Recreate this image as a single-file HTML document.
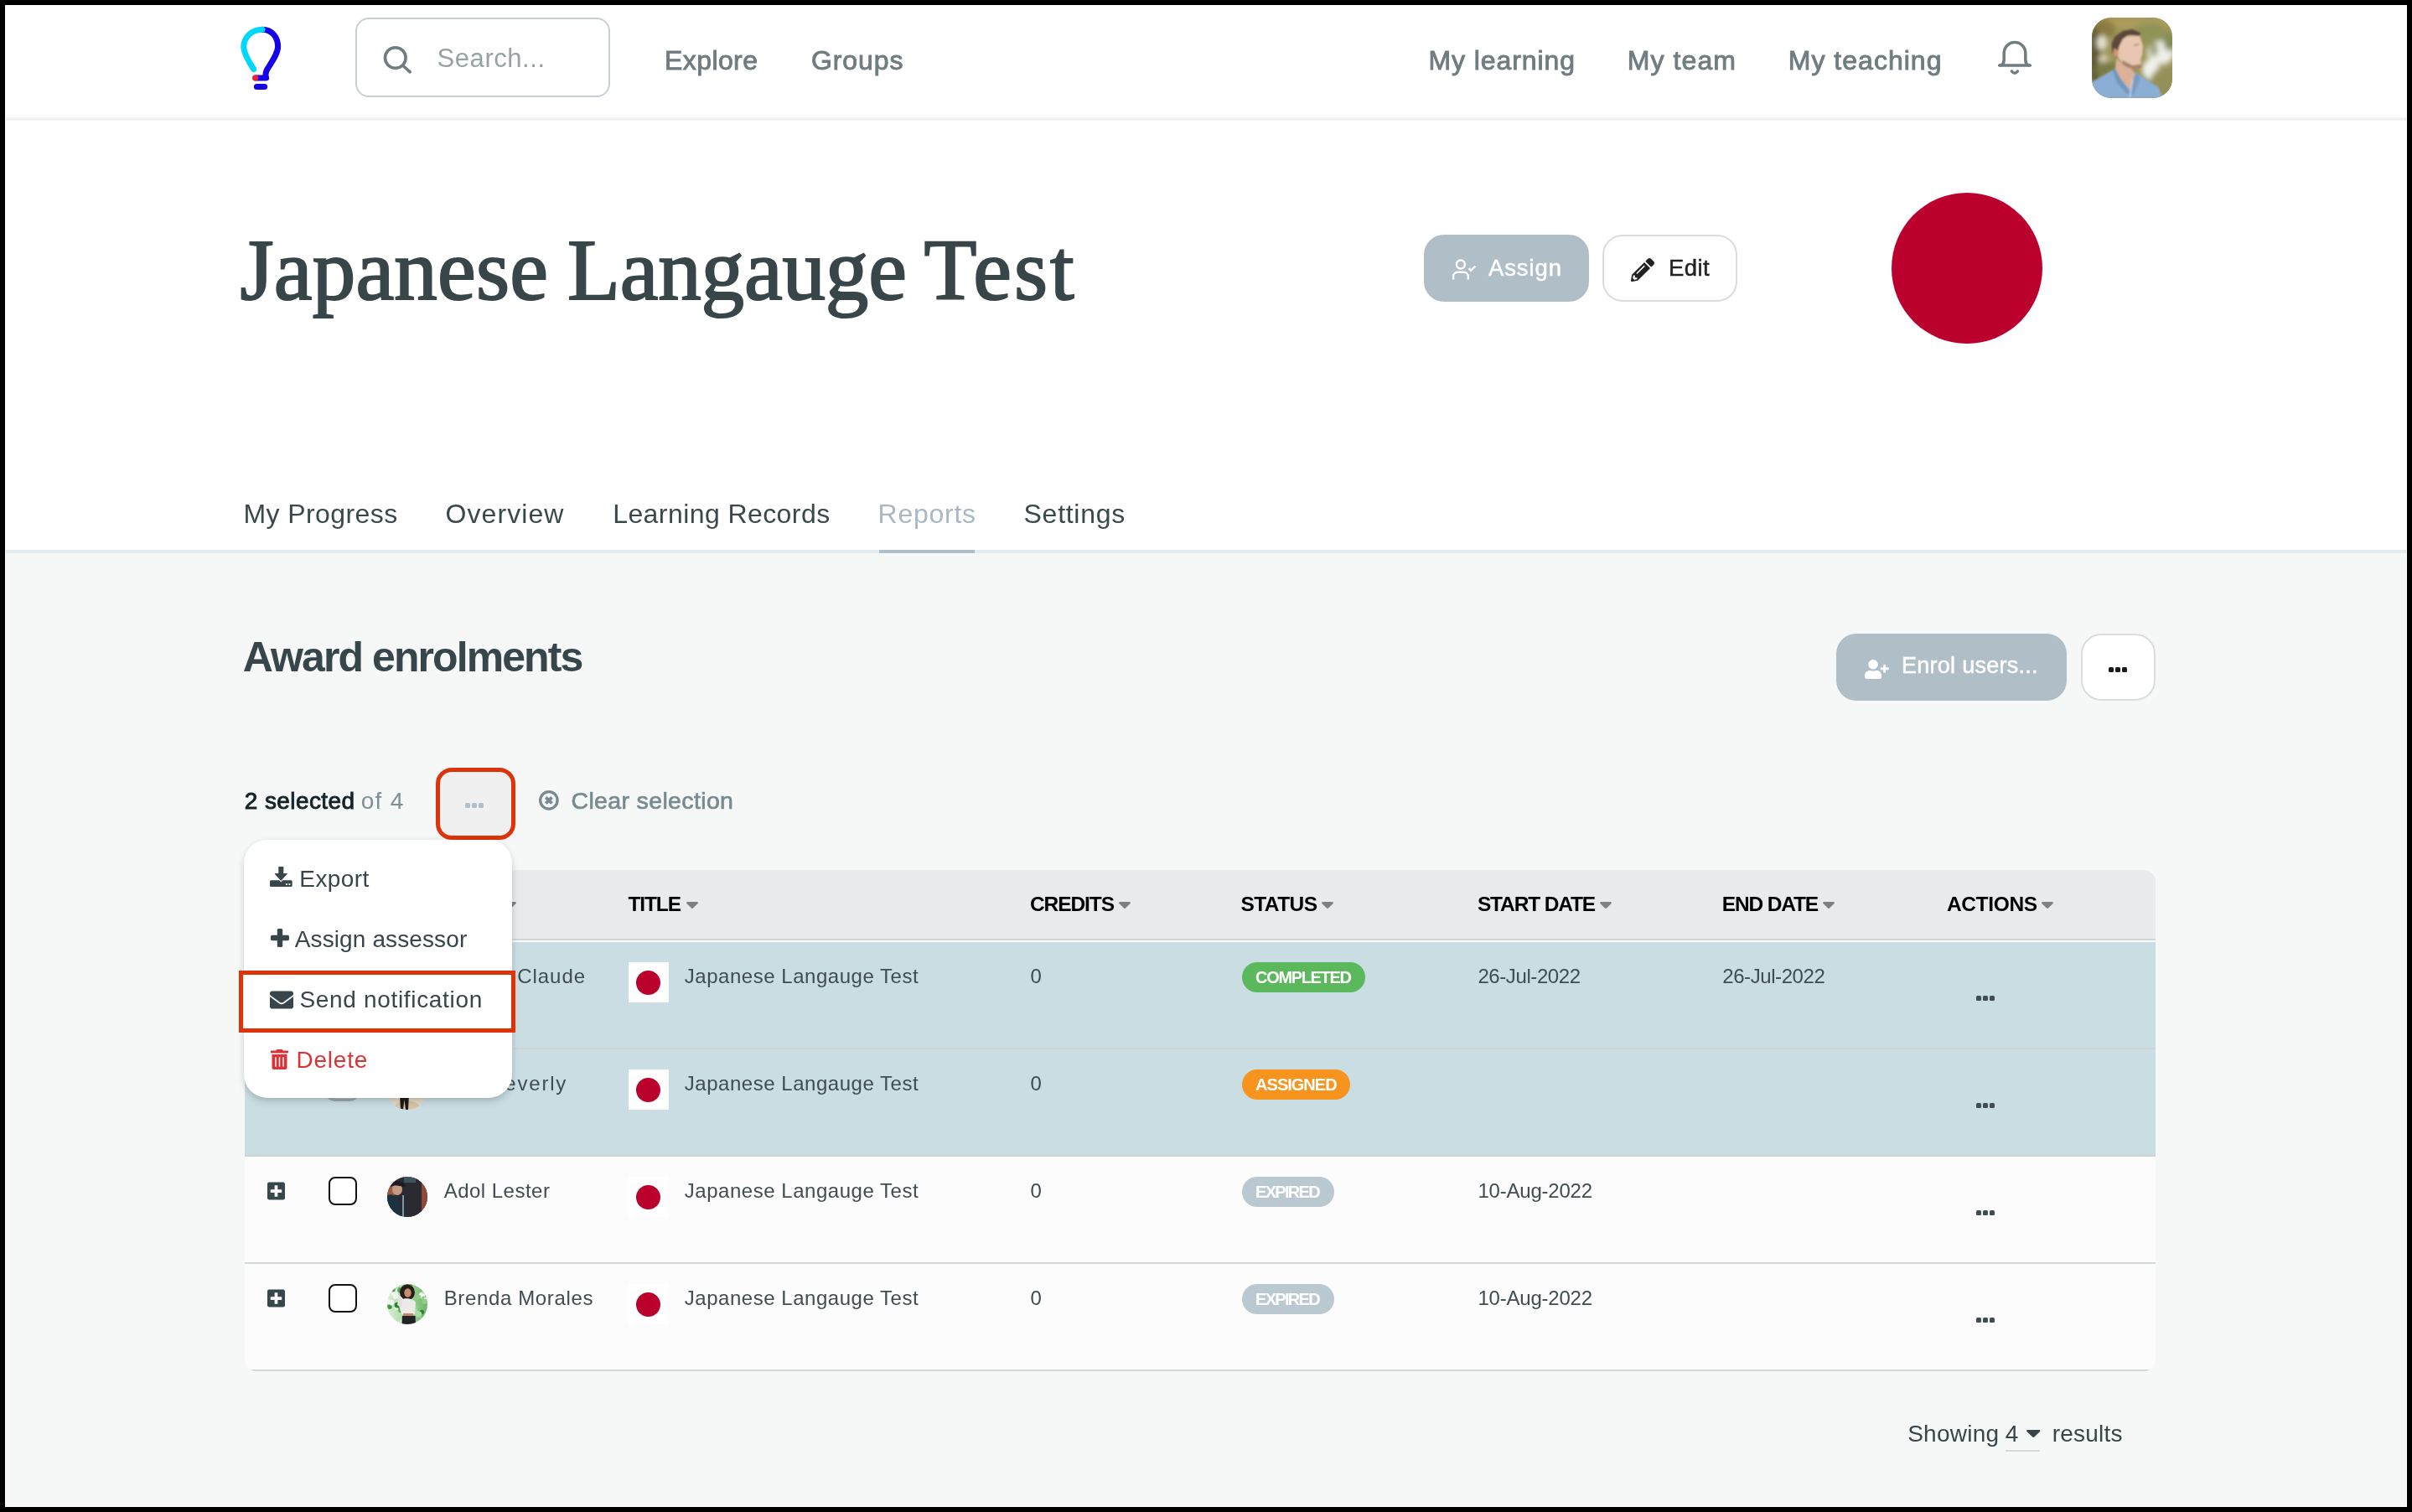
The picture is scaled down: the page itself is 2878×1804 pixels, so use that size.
<!DOCTYPE html>
<html lang="en">
<head>
<meta charset="utf-8">
<title>Japanese Langauge Test - Award enrolments</title>
<style>
*{box-sizing:border-box;margin:0;padding:0}
html,body{width:2878px;height:1804px;overflow:hidden;background:#000}
body{position:relative;font-family:"Liberation Sans",sans-serif;color:#37464a}
.abs,.t{position:absolute}
.t{white-space:pre;line-height:1;display:block}
.serif{font-family:"Liberation Serif",serif}
#page{position:absolute;left:6px;top:6px;width:2866px;height:1792px;background:#fff;overflow:hidden}
#wrap{position:absolute;left:-6px;top:-6px;width:2878px;height:1804px;will-change:transform}
svg{position:absolute;overflow:visible}
@media (max-width:1500px){html{zoom:.5}}
</style>
</head>
<body>
<div id="page"><div id="wrap">
<div class="abs" style="left:7px;top:140px;width:2864px;height:2px;background:#f3f4f6"></div>
<div class="abs" style="left:7px;top:142px;width:2864px;height:1px;background:#ebecec"></div>
<div class="abs" style="left:7px;top:143px;width:2864px;height:1px;background:#f6f6f6"></div>
<svg style="left:280px;top:24px" width="64" height="90" viewBox="280 24 64 90" fill="none" stroke-linecap="round" stroke-linejoin="round" stroke-width="7">
<path stroke="#1500e8" d="M313 35.3C324.500 35.300 331.600 44.500 331.600 55.7C331.600 63.500 325 73 319.500 81.5C317.200 85 316.400 89 317.600 93H305"/>
<path stroke="#00d8fb" d="M313 35.3C300.500 35.300 290.800 44.500 290.800 55.7C290.800 62.500 296.500 73 302.700 82.5"/>
<circle cx="304.7" cy="93" r="3.6" fill="#f01e3c" stroke="none"/>
<path stroke="#1500e8" d="M306.400 103.6H315.6"/>
</svg>
<div class="abs" style="left:424px;top:21px;width:304px;height:95px;border:2px solid #c7cfd2;border-radius:16px;background:#fff"></div>
<svg style="left:450px;top:48px" width="48" height="48" viewBox="450 48 48 48" fill="none" stroke="#6f7c80" stroke-width="3.6" stroke-linecap="round">
<circle cx="471.8" cy="69" r="12.3"/><path d="M481 78.5L489.200 85.8"/></svg>
<svg style="left:2380px;top:44px" width="48" height="50" viewBox="2380 44 48 50" fill="none" stroke="#6f7c80" stroke-width="3.5" stroke-linecap="round" stroke-linejoin="round">
<path d="M2385.6 77.9H2422.4"/>
<path d="M2387.5 77.9C2391.2 76.5 2391.2 73.5 2391.2 70V63.4A12.8 12.8 0 0 1 2416.8 63.4V70C2416.8 73.5 2416.8 76.5 2420.5 77.9"/>
<path d="M2400.4 85Q2403.9 89.6 2407.4 85"/>
</svg>
<svg style="left:2496px;top:21px" width="96" height="96" viewBox="0 0 96 96">
<defs><clipPath id="ca"><rect width="96" height="96" rx="23"/></clipPath>
<filter id="b3" x="-30%" y="-30%" width="160%" height="160%"><feGaussianBlur stdDeviation="3.2"/></filter><filter id="b1" x="-20%" y="-20%" width="140%" height="140%"><feGaussianBlur stdDeviation="0.9"/></filter></defs>
<g clip-path="url(#ca)">
<rect width="96" height="96" fill="#9a9459"/>
<g filter="url(#b3)">
<rect x="0" y="0" width="96" height="14" fill="#ad9c5c"/>
<ellipse cx="12" cy="14" rx="16" ry="12" fill="#8a7b3f"/>
<ellipse cx="4" cy="46" rx="7" ry="34" fill="#5b5530"/>
<ellipse cx="12" cy="30" rx="6" ry="9" fill="#e6e3d2"/>
<ellipse cx="14" cy="50" rx="6" ry="6" fill="#d9d2b4"/>
<ellipse cx="18" cy="62" rx="14" ry="10" fill="#7c7c48"/>
<ellipse cx="70" cy="18" rx="22" ry="12" fill="#8f9457"/>
<ellipse cx="82" cy="42" rx="16" ry="14" fill="#eef0ea"/>
<ellipse cx="70" cy="62" rx="10" ry="12" fill="#f1f2ee"/>
<ellipse cx="92" cy="30" rx="6" ry="10" fill="#7f8a50"/>
<ellipse cx="86" cy="76" rx="16" ry="16" fill="#959058"/>
<ellipse cx="74" cy="38" rx="5" ry="9" fill="#9aa276"/>
</g>
<g filter="url(#b1)">
<path d="M0 77L24.7 62.6 28.3 61.1 53.3 66.1 65.4 74 79.7 83.3 84 96H0z" fill="#8aaed4"/>
<path d="M29.7 48.3L38.3 56.9 48.3 61.9 51.1 66.9 46.9 86.9 34 72.6 27.6 62.6z" fill="#dcb198"/>
<path d="M28.3 61.1L34 72.6 45.4 89 43 92 30 78 24.7 63z" fill="#7396bd"/>
<path d="M51.1 69L53.3 66.1 58 72 50 92 46 92z" fill="#7a9cc2"/>
<path d="M48.3 74L45.4 95.4" stroke="#c9d9ea" stroke-width="1.4" fill="none"/>
<path d="M36.9 22.6L56.9 21.1 61.1 34 60.4 44 58.3 49.7 59 58.3 52.6 61.9 44 59.7 36.9 54.7 31.1 46.9 31.1 36.9z" fill="#e8c6b1"/>
<path d="M36.9 51.1L48.3 56.9 58.3 55.4 59.4 59 52.6 62.3 44 60 36.1 54.7z" fill="#a9836b"/>
<ellipse cx="28.6" cy="41.1" rx="3" ry="5" fill="#d7916f"/>
<path d="M24.7 44L23.6 31.1 27.6 22.6 36.9 16.1 48.3 14 58.3 18.3 56.9 21.9 44 20.4 36.9 25.4 32.6 34 31.1 39.7 27 36z" fill="#5b473b"/>
<path d="M50 33l6-1" stroke="#7a5a4a" stroke-width="1.2"/>
</g>
</g></svg>
<div class="abs" style="left:1699px;top:280px;width:197px;height:80px;background:#b0bec7;border-radius:24px"></div>
<svg style="left:1728px;top:304px" width="40" height="36" viewBox="1728 304 40 36" fill="none" stroke="#fff" stroke-width="2.4" stroke-linecap="butt" stroke-linejoin="miter">
<circle cx="1742.9" cy="315.5" r="5"/>
<path d="M1734.100 333.4V329.8A5 5 0 0 1 1739.100 324.8H1746.8A5 5 0 0 1 1751.800 329.8V333.4"/>
<path d="M1752.600 319.9L1755 322.8L1760.400 317.7"/>
</svg>
<div class="abs" style="left:1912px;top:280px;width:161px;height:80px;background:#fff;border:2px solid #dcdcdc;border-radius:24px"></div>
<svg style="left:1945.8px;top:307.7px" width="28.00" height="28.00" viewBox="0 0 512 512"><path fill="#222" d="M497.9 142.1l-46.1 46.1c-4.7 4.7-12.3 4.7-17 0l-111-111c-4.7-4.7-4.7-12.3 0-17l46.1-46.1c18.7-18.7 49.1-18.7 67.9 0l60.1 60.1c18.8 18.7 18.8 49.1 0 67.9zM284.2 99.8L21.6 362.4.4 483.9c-2.9 16.4 11.4 30.6 27.8 27.8l121.5-21.3 262.6-262.6c4.7-4.7 4.7-12.3 0-17l-111-111c-4.8-4.7-12.4-4.7-17.1 0zM124.1 339.9c-5.5-5.5-5.5-14.3 0-19.8l154-154c5.5-5.5 14.3-5.5 19.8 0s5.5 14.3 0 19.8l-154 154c-5.5 5.5-14.3 5.5-19.8 0zM88 424h48v36.3l-64.5 11.3-31.1-31.1L51.7 376H88v48z"/></svg>
<div class="abs" style="left:2256.7px;top:229.8px;width:180px;height:180px;background:#bc002d;border-radius:50%"></div>
<div class="abs" style="left:7px;top:656px;width:2864px;height:4px;background:#e3ebee"></div>
<div class="abs" style="left:1049px;top:656px;width:113.6px;height:4px;background:#b0bec7"></div>
<div class="abs" style="left:7px;top:660px;width:2864px;height:1137px;background:#f6f8f8"></div>
<div class="abs" style="left:2191px;top:756px;width:275px;height:80px;background:#b0bec7;border-radius:24px"></div>
<svg style="left:2225px;top:786.7px" width="28.75" height="23.00" viewBox="0 0 640 512"><path fill="#fff" d="M624 208h-64v-64c0-8.8-7.2-16-16-16h-32c-8.8 0-16 7.2-16 16v64h-64c-8.8 0-16 7.2-16 16v32c0 8.8 7.2 16 16 16h64v64c0 8.8 7.2 16 16 16h32c8.8 0 16-7.2 16-16v-64h64c8.8 0 16-7.2 16-16v-32c0-8.8-7.2-16-16-16zm-400 48c70.7 0 128-57.3 128-128S294.7 0 224 0 96 57.3 96 128s57.3 128 128 128zm89.6 32h-16.7c-22.2 10.2-46.9 16-72.9 16s-50.6-5.8-72.9-16h-16.7C60.2 288 0 348.2 0 422.4V464c0 26.5 21.5 48 48 48h352c26.5 0 48-21.5 48-48v-41.6c0-74.2-60.2-134.4-134.4-134.4z"/></svg>
<div class="abs" style="left:2482.5px;top:756px;width:89px;height:80px;background:#fff;border:2px solid #dcdcdc;border-radius:24px"></div>
<div class="abs" style="left:2516px;top:796px;width:6px;height:6px;background:#1a1a1a;border-radius:1.5px"></div><div class="abs" style="left:2524px;top:796px;width:6px;height:6px;background:#1a1a1a;border-radius:1.5px"></div><div class="abs" style="left:2532px;top:796px;width:6px;height:6px;background:#1a1a1a;border-radius:1.5px"></div>
<div class="abs" style="left:520px;top:916px;width:95px;height:85.5px;background:#f0f0f1;border:5px solid #de3309;border-radius:19px"></div>
<div class="abs" style="left:554.5px;top:958px;width:6px;height:6px;background:#afc0cc;border-radius:1.5px"></div><div class="abs" style="left:562.5px;top:958px;width:6px;height:6px;background:#afc0cc;border-radius:1.5px"></div><div class="abs" style="left:570.5px;top:958px;width:6px;height:6px;background:#afc0cc;border-radius:1.5px"></div>
<svg style="left:642.6px;top:943px" width="23.8" height="23.8" viewBox="0 0 23.8 23.8" fill="none" stroke="#788a91"><circle cx="11.9" cy="11.9" r="10.2" stroke-width="3.3"/><path d="M8.3 8.3l7.2 7.2M15.5 8.3l-7.2 7.2" stroke-width="3.8"/></svg>
<div class="abs" style="left:292px;top:1038px;width:2280px;height:598px;border-radius:14px;overflow:hidden;background:#fcfcfc"><div class="abs" style="left:0px;top:0px;width:2280px;height:82px;background:#e8eaec"></div><div class="abs" style="left:0px;top:82px;width:2280px;height:2px;background:#d2d5d7"></div><div class="abs" style="left:0px;top:84px;width:2280px;height:2px;background:#fbfbfb"></div><div class="abs" style="left:0px;top:86px;width:2280px;height:126px;background:#c9dde2"></div><div class="abs" style="left:0px;top:212px;width:2280px;height:2px;background:#d3d3d3"></div><div class="abs" style="left:0px;top:214px;width:2280px;height:126px;background:#c9dde2"></div><div class="abs" style="left:0px;top:340px;width:2280px;height:2px;background:#cfd2d4"></div><div class="abs" style="left:0px;top:468px;width:2280px;height:2px;background:#d3d6d8"></div><div class="abs" style="left:0px;top:596px;width:2280px;height:2px;background:#d3d6d8"></div></div>
<svg style="left:602px;top:1076px" width="14" height="8" viewBox="0 0 14 8"><path fill="#808080" d="M1.2 0h11.6c1 0 1.5 1.2.8 1.9L8 7.5c-.55.55-1.45.55-2 0L.4 1.9C-.3 1.2.2 0 1.2 0z"/></svg>
<svg style="left:818.5px;top:1076px" width="14" height="8" viewBox="0 0 14 8"><path fill="#808080" d="M1.2 0h11.6c1 0 1.5 1.2.8 1.9L8 7.5c-.55.55-1.45.55-2 0L.4 1.9C-.3 1.2.2 0 1.2 0z"/></svg>
<svg style="left:1335px;top:1076px" width="14" height="8" viewBox="0 0 14 8"><path fill="#808080" d="M1.2 0h11.6c1 0 1.5 1.2.8 1.9L8 7.5c-.55.55-1.45.55-2 0L.4 1.9C-.3 1.2.2 0 1.2 0z"/></svg>
<svg style="left:1577px;top:1076px" width="14" height="8" viewBox="0 0 14 8"><path fill="#808080" d="M1.2 0h11.6c1 0 1.5 1.2.8 1.9L8 7.5c-.55.55-1.45.55-2 0L.4 1.9C-.3 1.2.2 0 1.2 0z"/></svg>
<svg style="left:1909px;top:1076px" width="14" height="8" viewBox="0 0 14 8"><path fill="#808080" d="M1.2 0h11.6c1 0 1.5 1.2.8 1.9L8 7.5c-.55.55-1.45.55-2 0L.4 1.9C-.3 1.2.2 0 1.2 0z"/></svg>
<svg style="left:2175px;top:1076px" width="14" height="8" viewBox="0 0 14 8"><path fill="#808080" d="M1.2 0h11.6c1 0 1.5 1.2.8 1.9L8 7.5c-.55.55-1.45.55-2 0L.4 1.9C-.3 1.2.2 0 1.2 0z"/></svg>
<svg style="left:2436px;top:1076px" width="14" height="8" viewBox="0 0 14 8"><path fill="#808080" d="M1.2 0h11.6c1 0 1.5 1.2.8 1.9L8 7.5c-.55.55-1.45.55-2 0L.4 1.9C-.3 1.2.2 0 1.2 0z"/></svg>
<svg style="left:318.5px;top:1152.5px" width="21.00" height="24.00" viewBox="0 0 448 512"><path fill="#37474a" d="M400 32H48C21.5 32 0 53.5 0 80v352c0 26.5 21.5 48 48 48h352c26.5 0 48-21.5 48-48V80c0-26.5-21.5-48-48-48zm-32 252c0 6.6-5.4 12-12 12h-92v92c0 6.6-5.4 12-12 12h-56c-6.6 0-12-5.4-12-12v-92H92c-6.6 0-12-5.4-12-12v-56c0-6.6 5.4-12 12-12h92v-92c0-6.6 5.4-12 12-12h56c6.6 0 12 5.4 12 12v92h92c6.6 0 12 5.4 12 12v56z"/></svg>
<div class="abs" style="left:389px;top:1147px;width:39px;height:39px;background:#b0bec7;border:3px solid #9eabb5;border-radius:10px"></div><svg style="left:399px;top:1156px" width="20" height="18" viewBox="0 0 20 18" fill="none" stroke="#fff" stroke-width="3.2" stroke-linecap="round" stroke-linejoin="round"><path d="M3 9.5l5 5L17 4"/></svg>
<div class="abs" style="left:750px;top:1147.7px;width:48px;height:48px;background:#ffffff"></div><div class="abs" style="left:758.8px;top:1157.7px;width:29px;height:29px;background:#bc002d;border-radius:50%"></div>
<div class="abs" style="left:2358px;top:1187.5px;width:6px;height:6px;background:#3f4c50;border-radius:1.5px"></div><div class="abs" style="left:2366px;top:1187.5px;width:6px;height:6px;background:#3f4c50;border-radius:1.5px"></div><div class="abs" style="left:2374px;top:1187.5px;width:6px;height:6px;background:#3f4c50;border-radius:1.5px"></div>
<svg style="left:318.5px;top:1280.5px" width="21.00" height="24.00" viewBox="0 0 448 512"><path fill="#37474a" d="M400 32H48C21.5 32 0 53.5 0 80v352c0 26.5 21.5 48 48 48h352c26.5 0 48-21.5 48-48V80c0-26.5-21.5-48-48-48zm-32 252c0 6.6-5.4 12-12 12h-92v92c0 6.6-5.4 12-12 12h-56c-6.6 0-12-5.4-12-12v-92H92c-6.6 0-12-5.4-12-12v-56c0-6.6 5.4-12 12-12h92v-92c0-6.6 5.4-12 12-12h56c6.6 0 12 5.4 12 12v92h92c6.6 0 12 5.4 12 12v56z"/></svg>
<div class="abs" style="left:389px;top:1275px;width:39px;height:39px;background:#b0bec7;border:3px solid #9eabb5;border-radius:10px"></div><svg style="left:399px;top:1284px" width="20" height="18" viewBox="0 0 20 18" fill="none" stroke="#fff" stroke-width="3.2" stroke-linecap="round" stroke-linejoin="round"><path d="M3 9.5l5 5L17 4"/></svg>
<div class="abs" style="left:750px;top:1275.7px;width:48px;height:48px;background:#ffffff"></div><div class="abs" style="left:758.8px;top:1285.7px;width:29px;height:29px;background:#bc002d;border-radius:50%"></div>
<div class="abs" style="left:2358px;top:1315.5px;width:6px;height:6px;background:#3f4c50;border-radius:1.5px"></div><div class="abs" style="left:2366px;top:1315.5px;width:6px;height:6px;background:#3f4c50;border-radius:1.5px"></div><div class="abs" style="left:2374px;top:1315.5px;width:6px;height:6px;background:#3f4c50;border-radius:1.5px"></div>
<svg style="left:318.5px;top:1408.5px" width="21.00" height="24.00" viewBox="0 0 448 512"><path fill="#37474a" d="M400 32H48C21.5 32 0 53.5 0 80v352c0 26.5 21.5 48 48 48h352c26.5 0 48-21.5 48-48V80c0-26.5-21.5-48-48-48zm-32 252c0 6.6-5.4 12-12 12h-92v92c0 6.6-5.4 12-12 12h-56c-6.6 0-12-5.4-12-12v-92H92c-6.6 0-12-5.4-12-12v-56c0-6.6 5.4-12 12-12h92v-92c0-6.6 5.4-12 12-12h56c6.6 0 12 5.4 12 12v92h92c6.6 0 12 5.4 12 12v56z"/></svg>
<div class="abs" style="left:392px;top:1404px;width:34px;height:34px;background:#fff;border:2px solid #111;border-radius:8px"></div>
<div class="abs" style="left:750px;top:1403.7px;width:48px;height:48px;background:#ffffff"></div><div class="abs" style="left:758.8px;top:1413.7px;width:29px;height:29px;background:#bc002d;border-radius:50%"></div>
<div class="abs" style="left:2358px;top:1443.5px;width:6px;height:6px;background:#3f4c50;border-radius:1.5px"></div><div class="abs" style="left:2366px;top:1443.5px;width:6px;height:6px;background:#3f4c50;border-radius:1.5px"></div><div class="abs" style="left:2374px;top:1443.5px;width:6px;height:6px;background:#3f4c50;border-radius:1.5px"></div>
<svg style="left:318.5px;top:1536.5px" width="21.00" height="24.00" viewBox="0 0 448 512"><path fill="#37474a" d="M400 32H48C21.5 32 0 53.5 0 80v352c0 26.5 21.5 48 48 48h352c26.5 0 48-21.5 48-48V80c0-26.5-21.5-48-48-48zm-32 252c0 6.6-5.4 12-12 12h-92v92c0 6.6-5.4 12-12 12h-56c-6.6 0-12-5.4-12-12v-92H92c-6.6 0-12-5.4-12-12v-56c0-6.6 5.4-12 12-12h92v-92c0-6.6 5.4-12 12-12h56c6.6 0 12 5.4 12 12v92h92c6.6 0 12 5.4 12 12v56z"/></svg>
<div class="abs" style="left:392px;top:1532px;width:34px;height:34px;background:#fff;border:2px solid #111;border-radius:8px"></div>
<div class="abs" style="left:750px;top:1531.7px;width:48px;height:48px;background:#ffffff"></div><div class="abs" style="left:758.8px;top:1541.7px;width:29px;height:29px;background:#bc002d;border-radius:50%"></div>
<div class="abs" style="left:2358px;top:1571.5px;width:6px;height:6px;background:#3f4c50;border-radius:1.5px"></div><div class="abs" style="left:2366px;top:1571.5px;width:6px;height:6px;background:#3f4c50;border-radius:1.5px"></div><div class="abs" style="left:2374px;top:1571.5px;width:6px;height:6px;background:#3f4c50;border-radius:1.5px"></div>
<svg style="left:462px;top:1148px" width="48" height="48" viewBox="0 0 48 48">
<defs><clipPath id="cd"><circle cx="24" cy="24" r="24"/></clipPath></defs>
<g clip-path="url(#cd)"><rect width="48" height="48" fill="#7d8fa0"/><circle cx="24" cy="18" r="8" fill="#d9b096"/><path d="M8 48C8 34 40 34 40 48z" fill="#39424d"/><path d="M15 30h11l-1 18h-3l-1.5-12-1.5 12h-3z" fill="#1d1a18"/></g></svg>
<svg style="left:462px;top:1276px" width="48" height="48" viewBox="0 0 48 48">
<defs><clipPath id="ce"><circle cx="24" cy="24" r="24"/></clipPath></defs>
<g clip-path="url(#ce)"><rect width="48" height="48" fill="#e6d9c6"/><circle cx="24" cy="18" r="8" fill="#caa083"/><path d="M8 48C8 34 40 34 40 48z" fill="#d9c4a6"/><path d="M15 30h11l-1 18h-3l-1.5-12-1.5 12h-3z" fill="#1d1a18"/></g></svg>
<svg style="left:462px;top:1403.7px" width="48" height="48" viewBox="0 0 48 48">
<defs><clipPath id="cb"><circle cx="24" cy="24" r="24"/></clipPath><filter id="bb"><feGaussianBlur stdDeviation="0.7"/></filter></defs>
<g clip-path="url(#cb)"><rect width="48" height="48" fill="#2b2a31"/>
<g filter="url(#bb)">
<rect x="0" y="0" width="9" height="48" fill="#9c5a42"/>
<rect x="41" y="6" width="7" height="42" fill="#8f4a34"/>
<rect x="16" y="0" width="25" height="48" fill="#2a2930"/>
<rect x="20" y="0" width="14" height="7" fill="#3c5560"/>
<path d="M0 22C4 20 10 22 14 26L17 48H0z" fill="#1f3040"/>
<ellipse cx="12" cy="15" rx="6" ry="7" fill="#c49a80"/>
<path d="M4 10C6 4 16 3 21 9L23 12 14 11C10 10 6 11 4 12z" fill="#1c1f26"/>
<rect x="18" y="22" width="2" height="26" fill="#7f98a0"/>
</g></g></svg>
<svg style="left:462px;top:1531.8px" width="48" height="48" viewBox="0 0 48 48">
<defs><clipPath id="cc"><circle cx="24" cy="24" r="24"/></clipPath><filter id="bc"><feGaussianBlur stdDeviation="0.6"/></filter><linearGradient id="gb" x1="0" x2="1" y1="0" y2="0"><stop offset="0" stop-color="#d9eed5"/><stop offset="0.5" stop-color="#a5d69f"/><stop offset="1" stop-color="#6fb569"/></linearGradient></defs>
<g clip-path="url(#cc)"><rect width="48" height="48" fill="url(#gb)"/>
<g filter="url(#bc)">
<circle cx="15.5" cy="7.2" r="3.2" fill="#57a653"/><circle cx="4.5" cy="28.0" r="1.7" fill="#8fcf8a"/><circle cx="20.8" cy="3.4" r="2.7" fill="#57a653"/><circle cx="2.8" cy="27.1" r="2.8" fill="#3f9440"/><circle cx="19.0" cy="46.9" r="2.2" fill="#eef7ec"/><circle cx="6.9" cy="5.7" r="2.0" fill="#cfe9cb"/><circle cx="27.9" cy="30.7" r="1.8" fill="#e8f5e5"/><circle cx="34.2" cy="27.1" r="2.6" fill="#8fcf8a"/><circle cx="25.5" cy="37.3" r="2.8" fill="#a9dba4"/><circle cx="21.8" cy="14.4" r="3.0" fill="#6db868"/><circle cx="11.7" cy="27.6" r="3.1" fill="#e8f5e5"/><circle cx="13.8" cy="47.0" r="1.9" fill="#f6fbf5"/><circle cx="16.4" cy="44.8" r="1.8" fill="#cfe9cb"/><circle cx="26.8" cy="37.9" r="2.3" fill="#e8f5e5"/><circle cx="16.8" cy="23.8" r="3.3" fill="#57a653"/><circle cx="45.3" cy="22.8" r="1.7" fill="#57a653"/><circle cx="33.7" cy="31.1" r="2.2" fill="#a9dba4"/><circle cx="18.5" cy="32.1" r="2.3" fill="#f6fbf5"/><circle cx="29.3" cy="23.7" r="3.1" fill="#8fcf8a"/><circle cx="6.2" cy="11.9" r="1.8" fill="#f6fbf5"/><circle cx="21.6" cy="26.4" r="3.2" fill="#6db868"/><circle cx="41.5" cy="13.4" r="3.6" fill="#f4faf2"/><circle cx="32.8" cy="18.3" r="1.9" fill="#8fcf8a"/><circle cx="8.5" cy="11.1" r="3.3" fill="#f6fbf5"/><circle cx="8.8" cy="13.5" r="2.3" fill="#cfe9cb"/><circle cx="27.2" cy="45.7" r="2.5" fill="#3f9440"/><circle cx="41.8" cy="45.7" r="2.4" fill="#f4faf2"/><circle cx="18.9" cy="23.1" r="1.7" fill="#eef7ec"/><circle cx="10.0" cy="7.8" r="1.8" fill="#eef7ec"/><circle cx="27.2" cy="25.8" r="2.8" fill="#e8f5e5"/><circle cx="3.4" cy="10.0" r="2.1" fill="#cfe9cb"/><circle cx="16.7" cy="17.5" r="3.6" fill="#f6fbf5"/><circle cx="22.4" cy="23.2" r="1.9" fill="#57a653"/><circle cx="36.0" cy="35.5" r="3.3" fill="#a9dba4"/><circle cx="7.7" cy="1.1" r="1.9" fill="#e8f5e5"/><circle cx="26.1" cy="1.3" r="3.6" fill="#2f8236"/><circle cx="41.4" cy="33.4" r="2.6" fill="#2f8236"/><circle cx="43.6" cy="17.1" r="2.7" fill="#8fcf8a"/><circle cx="37.4" cy="15.8" r="2.8" fill="#8fcf8a"/><circle cx="37.8" cy="36.4" r="3.2" fill="#8fcf8a"/><circle cx="39.3" cy="35.5" r="2.0" fill="#8fcf8a"/><circle cx="23.7" cy="35.1" r="3.2" fill="#3f9440"/><circle cx="22.7" cy="9.3" r="2.5" fill="#e8f5e5"/><circle cx="45.0" cy="47.4" r="1.8" fill="#e8f5e5"/><circle cx="4.9" cy="22.6" r="2.8" fill="#f6fbf5"/><circle cx="43.2" cy="40.3" r="3.4" fill="#a9dba4"/><circle cx="16.5" cy="30.9" r="3.4" fill="#57a653"/><circle cx="37.6" cy="36.0" r="3.4" fill="#a9dba4"/><circle cx="20.8" cy="30.5" r="3.2" fill="#57a653"/><circle cx="46.6" cy="19.0" r="3.1" fill="#f4faf2"/><circle cx="4.1" cy="7.6" r="1.9" fill="#3f9440"/><circle cx="43.4" cy="38.7" r="2.8" fill="#6db868"/><circle cx="28.6" cy="22.8" r="1.9" fill="#e8f5e5"/><circle cx="26.3" cy="1.0" r="2.7" fill="#57a653"/><circle cx="44.8" cy="20.8" r="3.3" fill="#8fcf8a"/><circle cx="10.1" cy="12.1" r="3.1" fill="#eef7ec"/><circle cx="15.6" cy="26.1" r="3.4" fill="#3f9440"/><circle cx="17.0" cy="22.0" r="3.3" fill="#f4faf2"/><circle cx="42.2" cy="6.3" r="2.6" fill="#6db868"/><circle cx="0.9" cy="21.1" r="3.2" fill="#eef7ec"/><circle cx="7.2" cy="6.8" r="2.7" fill="#57a653"/><circle cx="15.6" cy="24.9" r="3.4" fill="#57a653"/><circle cx="2.7" cy="9.2" r="2.6" fill="#eef7ec"/><circle cx="27.0" cy="36.5" r="2.5" fill="#57a653"/><circle cx="29.4" cy="24.3" r="3.0" fill="#8fcf8a"/><circle cx="21.7" cy="25.6" r="2.6" fill="#a9dba4"/><circle cx="11.9" cy="25.1" r="3.4" fill="#2f8236"/><circle cx="42.9" cy="9.7" r="1.9" fill="#a9dba4"/><circle cx="5.8" cy="21.2" r="2.5" fill="#eef7ec"/><circle cx="10.2" cy="14.5" r="3.5" fill="#eef7ec"/>
<ellipse cx="24" cy="10" rx="9" ry="9.5" fill="#2a1e1a"/>
<ellipse cx="24.5" cy="10.5" rx="4.2" ry="5.2" fill="#c48f70"/>
<path d="M13 22C15 15.5 31 15.5 34 22L33 36H17z" fill="#eceae7"/>
<path d="M12 25l2-10 4 1-1 12z" fill="#e4e1dd"/>
<rect x="19" y="35" width="12" height="3.2" fill="#bf8a6c"/>
<path d="M18 38h15.5l.5 10H17.5z" fill="#202227"/>
</g></g></svg>
<div class="abs" style="left:1481.5px;top:1147.7px;width:147.5px;height:36px;background:#5cb85c;border-radius:18px"></div>
<div class="abs" style="left:1482px;top:1275.8px;width:129px;height:36px;background:#f7941d;border-radius:18px"></div>
<div class="abs" style="left:1482px;top:1403.8px;width:110px;height:36px;background:#b9c8d1;border-radius:18px"></div>
<div class="abs" style="left:1482px;top:1531.8px;width:110px;height:36px;background:#b9c8d1;border-radius:18px"></div>
<svg style="left:2417.5px;top:1705.8px" width="16.5" height="9" viewBox="0 0 16.5 9"><path fill="#37464a" d="M1.3 0h13.9c1.1 0 1.6 1.3.9 2.1L9.3 8.5c-.6.6-1.5.6-2.1 0L.4 2.1C-.4 1.3.2 0 1.3 0z"/></svg>
<div class="abs" style="left:2393px;top:1730px;width:41px;height:2px;background:#d5dadc"></div>
<div class="t" style="left:521.61px;top:54.01px;font-size:31px;color:#98a2a5;letter-spacing:0.541px">Search...</div>
<div class="t" style="left:793.01px;top:56.16px;font-size:32px;color:#6f7c80;letter-spacing:0.413px;-webkit-text-stroke:0.9px #6f7c80">Explore</div>
<div class="t" style="left:968.01px;top:56.16px;font-size:32px;color:#6f7c80;letter-spacing:0.889px;-webkit-text-stroke:0.9px #6f7c80">Groups</div>
<div class="t" style="left:1704.51px;top:56.16px;font-size:32px;color:#6f7c80;letter-spacing:0.907px;-webkit-text-stroke:0.9px #6f7c80">My learning</div>
<div class="t" style="left:1941.81px;top:56.16px;font-size:32px;color:#6f7c80;letter-spacing:1.082px;-webkit-text-stroke:0.9px #6f7c80">My team</div>
<div class="t" style="left:2133.71px;top:56.16px;font-size:32px;color:#6f7c80;letter-spacing:1.025px;-webkit-text-stroke:0.9px #6f7c80">My teaching</div>
<div class="t serif" style="left:286.44px;top:270.99px;font-size:103px;color:#394649;letter-spacing:0.225px;-webkit-text-stroke:2.0px #394649">Japanese</div>
<div class="t serif" style="left:676.94px;top:270.99px;font-size:103px;color:#394649;letter-spacing:-0.165px;-webkit-text-stroke:2.0px #394649">Langauge</div>
<div class="t serif" style="left:1102.54px;top:270.99px;font-size:103px;color:#394649;letter-spacing:2.955px;-webkit-text-stroke:2.0px #394649">Test</div>
<div class="t" style="left:1776.01px;top:305.97px;font-size:27.5px;color:#ffffff;letter-spacing:0.886px;-webkit-text-stroke:0.5px #ffffff">Assign</div>
<div class="t" style="left:1991.01px;top:305.97px;font-size:27.5px;color:#222222;letter-spacing:0.395px;-webkit-text-stroke:0.5px #222222">Edit</div>
<div class="t" style="left:290.56px;top:597.16px;font-size:32px;color:#3a484c;letter-spacing:0.399px">My Progress</div>
<div class="t" style="left:531.56px;top:597.16px;font-size:32px;color:#3a484c;letter-spacing:1.074px">Overview</div>
<div class="t" style="left:731.16px;top:597.16px;font-size:32px;color:#3a484c;letter-spacing:0.426px">Learning Records</div>
<div class="t" style="left:1047.56px;top:597.16px;font-size:32px;color:#a9b8c2;letter-spacing:0.739px">Reports</div>
<div class="t" style="left:1221.56px;top:597.16px;font-size:32px;color:#3a484c;letter-spacing:0.722px">Settings</div>
<div class="t" style="left:289.75px;top:758.92px;font-size:50px;color:#37464a;letter-spacing:-1.921px;font-weight:700">Award enrolments</div>
<div class="t" style="left:2269.03px;top:781.39px;font-size:27px;color:#ffffff;letter-spacing:0.267px;-webkit-text-stroke:0.5px #ffffff">Enrol users...</div>
<div class="t" style="left:291.79px;top:941.55px;font-size:28px;color:#14232a;letter-spacing:0.398px;-webkit-text-stroke:0.9px #14232a">2 selected</div>
<div class="t" style="left:430.74px;top:941.55px;font-size:28px;color:#7d8f98;letter-spacing:1.272px">of 4</div>
<div class="t" style="left:681.47px;top:941.12px;font-size:28.5px;color:#788a91;letter-spacing:0.354px;-webkit-text-stroke:0.7px #788a91">Clear selection</div>
<div class="t" style="left:528.90px;top:1066.51px;font-size:24.5px;color:#000000;letter-spacing:1.376px;font-weight:700">USER</div>
<div class="t" style="left:749.40px;top:1066.51px;font-size:24.5px;color:#000000;letter-spacing:-1.085px;font-weight:700">TITLE</div>
<div class="t" style="left:1228.90px;top:1066.51px;font-size:24.5px;color:#000000;letter-spacing:-1.057px;font-weight:700">CREDITS</div>
<div class="t" style="left:1480.40px;top:1066.51px;font-size:24.5px;color:#000000;letter-spacing:-0.534px;font-weight:700">STATUS</div>
<div class="t" style="left:1762.90px;top:1066.51px;font-size:24.5px;color:#000000;letter-spacing:-1.147px;font-weight:700">START DATE</div>
<div class="t" style="left:2054.70px;top:1066.51px;font-size:24.5px;color:#000000;letter-spacing:-1.145px;font-weight:700">END DATE</div>
<div class="t" style="left:2322.90px;top:1066.51px;font-size:24.5px;color:#000000;letter-spacing:-0.341px;font-weight:700">ACTIONS</div>
<div class="t" style="left:529.72px;top:1152.93px;font-size:24px;color:#3f4c50;letter-spacing:1.535px">Martin</div>
<div class="t" style="left:617.22px;top:1152.93px;font-size:24px;color:#3f4c50;letter-spacing:0.960px">Claude</div>
<div class="t" style="left:816.72px;top:1152.93px;font-size:24px;color:#3f4c50;letter-spacing:0.532px">Japanese Langauge Test</div>
<div class="t" style="left:1229.42px;top:1152.93px;font-size:24px;color:#3f4c50;letter-spacing:0.000px">0</div>
<div class="t" style="left:1763.42px;top:1152.93px;font-size:24px;color:#3f4c50;letter-spacing:-0.409px">26-Jul-2022</div>
<div class="t" style="left:2055.22px;top:1152.93px;font-size:24px;color:#3f4c50;letter-spacing:-0.419px">26-Jul-2022</div>
<div class="t" style="left:529.72px;top:1280.93px;font-size:24px;color:#3f4c50;letter-spacing:-1.896px">Jane</div>
<div class="t" style="left:584.42px;top:1280.93px;font-size:24px;color:#3f4c50;letter-spacing:1.821px">Beverly</div>
<div class="t" style="left:816.72px;top:1280.93px;font-size:24px;color:#3f4c50;letter-spacing:0.532px">Japanese Langauge Test</div>
<div class="t" style="left:1229.42px;top:1280.93px;font-size:24px;color:#3f4c50;letter-spacing:0.000px">0</div>
<div class="t" style="left:529.72px;top:1408.93px;font-size:24px;color:#3f4c50;letter-spacing:0.475px">Adol Lester</div>
<div class="t" style="left:816.72px;top:1408.93px;font-size:24px;color:#3f4c50;letter-spacing:0.532px">Japanese Langauge Test</div>
<div class="t" style="left:1229.42px;top:1408.93px;font-size:24px;color:#3f4c50;letter-spacing:0.000px">0</div>
<div class="t" style="left:1763.42px;top:1408.93px;font-size:24px;color:#3f4c50;letter-spacing:-0.212px">10-Aug-2022</div>
<div class="t" style="left:529.72px;top:1536.93px;font-size:24px;color:#3f4c50;letter-spacing:0.634px">Brenda Morales</div>
<div class="t" style="left:816.72px;top:1536.93px;font-size:24px;color:#3f4c50;letter-spacing:0.532px">Japanese Langauge Test</div>
<div class="t" style="left:1229.42px;top:1536.93px;font-size:24px;color:#3f4c50;letter-spacing:0.000px">0</div>
<div class="t" style="left:1763.42px;top:1536.93px;font-size:24px;color:#3f4c50;letter-spacing:-0.212px">10-Aug-2022</div>
<div class="t" style="left:1498.10px;top:1156.32px;font-size:20px;color:#ffffff;letter-spacing:-1.345px;font-weight:700">COMPLETED</div>
<div class="t" style="left:1498.10px;top:1284.32px;font-size:20px;color:#ffffff;letter-spacing:-0.996px;font-weight:700">ASSIGNED</div>
<div class="t" style="left:1498.10px;top:1412.32px;font-size:20px;color:#ffffff;letter-spacing:-1.702px;font-weight:700">EXPIRED</div>
<div class="t" style="left:1498.10px;top:1540.32px;font-size:20px;color:#ffffff;letter-spacing:-1.702px;font-weight:700">EXPIRED</div>
<div class="t" style="left:2276.14px;top:1696.55px;font-size:28px;color:#37464a;letter-spacing:0.269px">Showing</div>
<div class="t" style="left:2392.74px;top:1696.55px;font-size:28px;color:#37464a;letter-spacing:0.000px">4</div>
<div class="t" style="left:2448.74px;top:1696.55px;font-size:28px;color:#37464a;letter-spacing:0.225px">results</div>
<div class="abs" style="left:291px;top:1002px;width:320px;height:308px;background:#fff;border-radius:28px;box-shadow:0 5px 10px -1px rgba(0,0,0,.17),0 0 7px rgba(0,0,0,.05)"></div>
<svg style="left:322px;top:1033.8px" width="26.7" height="24" viewBox="0 0 26.7 24"><path fill="#37464a" fill-rule="evenodd" d="M1.5 16.3h23.7c.8 0 1.5.7 1.5 1.5v4.7c0 .8-.7 1.5-1.5 1.5H1.5C.7 24 0 23.3 0 22.5v-4.7c0-.8.7-1.5 1.5-1.5zM19 20.2v1.8h2v-1.8zm3.400 0v1.8h2v-1.8z"/><path fill="#37464a" stroke="#fff" stroke-width="2.4" stroke-linejoin="miter" paint-order="stroke" d="M5.6 8.2L13.3 16.7 21 8.2z"/><path fill="#37464a" d="M10.3 0h6v9h-6z"/><path fill="#37464a" d="M5.6 8.2L13.3 16.7 21 8.2z"/></svg>
<svg style="left:322.5px;top:1108px" width="22" height="22" viewBox="0 0 22 22"><rect x="7.80" y="0" width="6.4" height="22" rx="1.6" fill="#37464a"/><rect x="0" y="7.80" width="22" height="6.4" rx="1.6" fill="#37464a"/></svg>
<svg style="left:322.4px;top:1179px" width="28.00" height="28.00" viewBox="0 0 512 512"><path fill="#37464a" d="M502.3 190.8c3.9-3.1 9.7-.2 9.7 4.7V400c0 26.5-21.5 48-48 48H48c-26.5 0-48-21.5-48-48V195.6c0-5 5.7-7.8 9.7-4.7 22.4 17.4 52.1 39.5 154.1 113.6 21.1 15.4 56.7 47.8 92.2 47.6 35.7.3 72-32.8 92.3-47.6 102-74.1 131.6-96.3 154-113.7zM256 320c23.2.4 56.6-29.2 73.4-41.4 132.7-96.3 142.8-104.7 173.4-128.7 5.8-4.5 9.2-11.5 9.2-18.9v-19c0-26.5-21.5-48-48-48H48C21.5 64 0 85.5 0 112v19c0 7.4 3.4 14.3 9.2 18.9 30.6 23.9 40.7 32.4 173.4 128.7 16.8 12.2 50.2 41.8 73.4 41.4z"/></svg>
<svg style="left:323.2px;top:1252px" width="21.00" height="24.00" viewBox="0 0 448 512"><path fill="#dc3235" d="M32 464a48 48 0 0 0 48 48h288a48 48 0 0 0 48-48V128H32zm272-256a16 16 0 0 1 32 0v224a16 16 0 0 1-32 0zm-96 0a16 16 0 0 1 32 0v224a16 16 0 0 1-32 0zm-96 0a16 16 0 0 1 32 0v224a16 16 0 0 1-32 0zM432 32H312l-9.4-18.7A24 24 0 0 0 281.1 0H166.8a23.72 23.72 0 0 0-21.4 13.3L136 32H16A16 16 0 0 0 0 48v32a16 16 0 0 0 16 16h416a16 16 0 0 0 16-16V48a16 16 0 0 0-16-16z"/></svg>
<div class="abs" style="left:285px;top:1158px;width:330px;height:74px;border:5px solid #de3309"></div>
<div class="t" style="left:357.34px;top:1034.55px;font-size:28px;color:#37464a;letter-spacing:0.396px">Export</div>
<div class="t" style="left:351.74px;top:1106.55px;font-size:28px;color:#37464a;letter-spacing:0.118px">Assign assessor</div>
<div class="t" style="left:357.54px;top:1178.55px;font-size:28px;color:#37464a;letter-spacing:0.667px">Send notification</div>
<div class="t" style="left:353.44px;top:1250.55px;font-size:28px;color:#dc3235;letter-spacing:0.777px">Delete</div>
</div></div>
</body>
</html>
